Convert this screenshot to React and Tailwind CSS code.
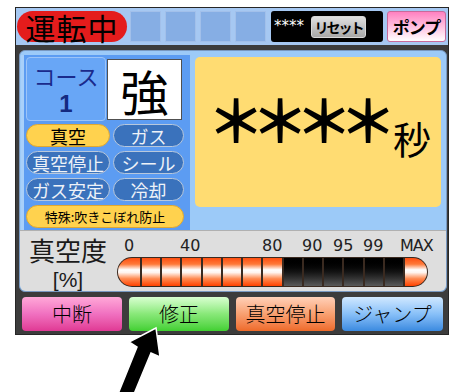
import React from "react";

const jp = { fontFamily: '"Noto Sans CJK JP", "Noto Sans", sans-serif' };

function Pill({ children, yellow, w, small }) {
  return (
    <div
      className={
        "h-full rounded-full flex items-center justify-center leading-none border whitespace-nowrap " +
        (yellow
          ? "bg-[#ffd24e] border-[#e0a830] text-black "
          : "bg-[#3a72bc] border-[#b8c8dc] text-[#eef2f8] ") +
        (small ? "text-[13px] " : "text-[18px] ")
      }
      style={{ width: w }}
    >
      {children}
    </div>
  );
}

function Seg({ on }) {
  return (
    <div
      className={
        "flex-1 h-full " +
        (on
          ? "bg-[linear-gradient(to_bottom,#ff4e10_0%,#ff7a3a_22%,#ffffff_42%,#fff4ee_52%,#ff8a50_74%,#ff4200_100%)]"
          : "bg-linear-to-b from-[#000000] via-[#141414] to-[#5a5a5a]")
      }
    />
  );
}

export default function App() {
  return (
    <div className="w-[457px] h-[392px] bg-white relative overflow-hidden pt-[7px] pl-[15px]" style={jp}>
      <div className="w-[434px] h-[328px] bg-[#3c3c3c] border border-[#262626] flex flex-col">
        {/* top bar */}
        <div className="h-[37px] bg-[#a6c8f2] flex items-center">
          <div className="ml-[1px] w-[110px] h-[31px] rounded-full bg-[#e41c1c] flex items-center justify-center text-[30px] leading-none text-black tracking-[1px]">
            運転中
          </div>
          <div className="ml-[3px] flex gap-[4px]">
            <div className="w-[31px] h-[31px] bg-[#86aee4] border border-[#a2c0ea]" />
            <div className="w-[31px] h-[31px] bg-[#86aee4] border border-[#a2c0ea]" />
            <div className="w-[31px] h-[31px] bg-[#86aee4] border border-[#a2c0ea]" />
            <div className="w-[31px] h-[31px] bg-[#86aee4] border border-[#a2c0ea]" />
          </div>
          <div className="ml-[5px] w-[112px] h-[31px] bg-black rounded-[3px] flex items-center pl-[3px] gap-[7px]">
            <span className="text-white text-[15px] leading-none tracking-[0px]" style={{ fontFamily: '"DejaVu Sans", sans-serif' }}>
              ****
            </span>
            <div className="w-[55px] h-[22px] rounded-[3px] bg-linear-to-b from-[#e0e0e0] to-[#a8a8a8] border border-[#d8d8d8] flex items-center justify-center text-[14px] font-bold leading-none text-black tracking-[-2px] whitespace-nowrap">
              リセット
            </div>
          </div>
          <div className="ml-[4px] w-[59px] h-[31px] rounded-[3px] bg-linear-to-b from-[#ff80c0] via-[#ffc0e0] to-[#ffffff] border border-[#c86a9a] flex items-center justify-center text-[17px] font-bold leading-none text-black tracking-[-1px] whitespace-nowrap">
            ポンプ
          </div>
        </div>

        {/* main panel */}
        <div className="mt-[5px] ml-[3px] w-[428px] h-[242px] rounded-[6px] overflow-hidden bg-[#9ccaf8] border border-[#7898c0] flex flex-col">
          <div className="h-[180px] flex pt-[4px] pl-[1px]">
            <div className="w-[169px] h-full bg-[#5c9cf2] border-l-[3px] border-[#a8d0fa] pt-[2px] pl-[2px] flex flex-col">
              <div className="flex items-start h-[64px]">
                <div className="w-[80px] h-[64px] rounded-[4px] bg-[#68a6f6] border border-[#9cc4f8] flex flex-col items-center pt-[2px]">
                  <span className="text-[22px] leading-[30px] text-[#1a2a8c]">コース</span>
                  <span className="text-[24px] leading-[28px] font-bold text-[#142a80]" style={{ fontFamily: '"Liberation Sans", sans-serif' }}>
                    1
                  </span>
                </div>
                <div className="ml-[1px] mt-[2px] w-[75px] h-[61px] bg-white border border-[#505050] flex items-center justify-center text-[48px] leading-[58px] text-black">
                  強
                </div>
              </div>
              <div className="mt-[3px] flex flex-col gap-[4px]">
                <div className="flex gap-[3px] h-[23px]">
                  <Pill yellow w={84}>真空</Pill>
                  <Pill w={71}>ガス</Pill>
                </div>
                <div className="flex gap-[3px] h-[23px]">
                  <Pill w={84}>真空停止</Pill>
                  <Pill w={71}>シール</Pill>
                </div>
                <div className="flex gap-[3px] h-[23px]">
                  <Pill w={84}>ガス安定</Pill>
                  <Pill w={71}>冷却</Pill>
                </div>
                <div className="flex h-[23px]">
                  <Pill yellow small w={158}>特殊:吹きこぼれ防止</Pill>
                </div>
              </div>
            </div>
            <div className="ml-[5px] mt-[2px] w-[246px] h-[150px] rounded-[5px] bg-[#ffdc72] flex items-start pl-[12px] pt-[32px]">
              <span className="text-[58px] leading-none font-bold text-black tracking-[-14px]">＊＊＊＊</span>
              <span className="ml-[10px] mt-[30px] text-[38px] leading-none text-black">秒</span>
            </div>
          </div>

          {/* gauge */}
          <div className="flex-1 bg-[#dedede] border-t border-[#b0b0b0] rounded-b-[6px] flex pl-[6px]">
            <div className="w-[84px] flex flex-col items-center">
              <span className="text-[26px] leading-[38px] text-[#1a1a1a]">真空度</span>
              <span className="text-[21px] leading-[22px] text-[#1a1a1a]" style={{ fontFamily: '"Liberation Sans", sans-serif' }}>
                [%]
              </span>
            </div>
            <div className="ml-[7px] w-[311px] flex flex-col">
              <div className="relative h-[24px] text-[16px] leading-none text-[#222]" style={{ fontFamily: '"DejaVu Sans", sans-serif' }}>
                <span className="absolute left-[7px] top-[7px]">0</span>
                <span className="absolute left-[63px] top-[7px]">40</span>
                <span className="absolute left-[145px] top-[7px]">80</span>
                <span className="absolute left-[185px] top-[7px]">90</span>
                <span className="absolute left-[216px] top-[7px]">95</span>
                <span className="absolute left-[246px] top-[7px]">99</span>
                <span className="absolute left-[283px] top-[7px] tracking-[-1px]">MAX</span>
              </div>
              <div className="mt-[2px] h-[30px] flex bg-[#3a2a20] rounded-full overflow-hidden gap-[2px] p-[1px]">
                <div className="w-[22px] h-full rounded-l-full bg-[linear-gradient(to_bottom,#ff4e10_0%,#ff7a3a_22%,#ffffff_42%,#fff4ee_52%,#ff8a50_74%,#ff4200_100%)]" />
                <Seg on />
                <Seg on />
                <Seg on />
                <Seg on />
                <Seg on />
                <Seg on />
                <Seg on />
                <Seg />
                <Seg />
                <Seg />
                <Seg />
                <Seg />
                <Seg />
                <div className="w-[22px] h-full rounded-r-full bg-[linear-gradient(to_bottom,#ff4e10_0%,#ff7a3a_22%,#ffffff_42%,#fff4ee_52%,#ff8a50_74%,#ff4200_100%)]" />
              </div>
            </div>
          </div>
        </div>

        {/* bottom buttons */}
        <div className="mt-[5px] ml-[6px] h-[34px] flex gap-[7px] text-[20px] leading-none text-black font-light">
          <div className="w-[100px] h-full rounded-[4px] bg-linear-to-b from-[#ffa8d8] via-[#f070c0] to-[#e03894] flex items-center justify-center">中断</div>
          <div className="w-[100px] h-full rounded-[4px] bg-linear-to-b from-[#d8ffd0] via-[#88e878] to-[#40d030] flex items-center justify-center">修正</div>
          <div className="w-[99px] h-full rounded-[4px] bg-linear-to-b from-[#ffd0b8] via-[#f8a070] to-[#ee6a28] flex items-center justify-center">真空停止</div>
          <div className="w-[101px] h-full rounded-[4px] bg-linear-to-b from-[#d0e8ff] via-[#88c0f8] to-[#3a8ae0] flex items-center justify-center">ジャンプ</div>
        </div>
      </div>

      {/* pointer arrow overlay */}
      <svg className="absolute left-0 top-0" width="457" height="392" viewBox="0 0 457 392">
        <polygon
          points="156,328 129,342 137,347 118,394 134,394 151,353 160,357"
          fill="#000"
          stroke="#fff"
          strokeWidth="1.5"
          strokeLinejoin="miter"
        />
      </svg>
    </div>
  );
}
